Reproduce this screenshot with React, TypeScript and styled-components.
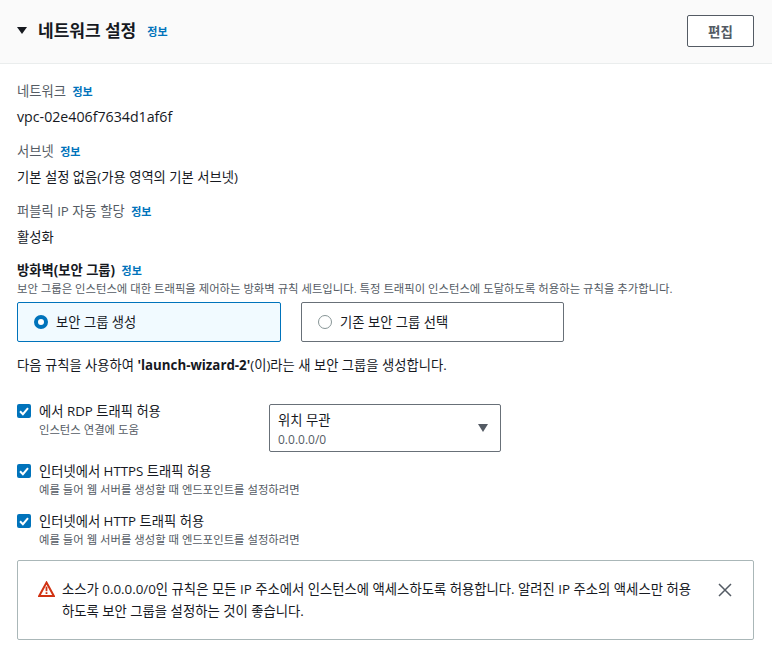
import React, { FC } from 'react';
import styled, { createGlobalStyle } from 'styled-components';

const GlobalStyle = createGlobalStyle`
  html, body {
    margin: 0;
    padding: 0;
    background: #fff;
  }
  body {
    font-family: "Open Sans", "Noto Sans CJK KR", sans-serif;
    font-size: 13.3px;
    color: #16191f;
    overflow: hidden;
  }
  * {
    box-sizing: border-box;
  }
`;

const fields = [
  { label: '네트워크', value: 'vpc-02e406f7634d1af6f', latin: true },
  { label: '서브넷', value: '기본 설정 없음(가용 영역의 기본 서브넷)' },
  { label: '퍼블릭 IP 자동 할당', value: '활성화' },
];

const CheckIcon: FC = () => (
  <svg width="14" height="14" viewBox="0 0 14 14" fill="none">
    <path d="M3 7.3 L5.9 10.2 L11 4.2" stroke="#fff" strokeWidth="2" />
  </svg>
);

const CheckRow: FC<{ title: string; hint: string }> = ({ title, hint }) => (
  <CheckLabel>
    <CheckBox>
      <CheckIcon />
    </CheckBox>
    <div>
      <CheckTitle>{title}</CheckTitle>
      <CheckHint>{hint}</CheckHint>
    </div>
  </CheckLabel>
);

export default function App() {
  return (
    <Page>
      <GlobalStyle />
      <Header>
        <HeaderTitle>
          <Caret />
          <Heading>네트워크 설정</Heading>
          <Info>정보</Info>
        </HeaderTitle>
        <EditButton>편집</EditButton>
      </Header>

      <Body>
        {fields.map((field) => (
          <Field key={field.label}>
            <FieldLabel>
              {field.label}
              <LabelInfo>정보</LabelInfo>
            </FieldLabel>
            <FieldValue $latin={field.latin}>{field.value}</FieldValue>
          </Field>
        ))}

        <FirewallLabel>
          방화벽(보안 그룹)
          <LabelInfo>정보</LabelInfo>
        </FirewallLabel>
        <FirewallHint>
          보안 그룹은 인스턴스에 대한 트래픽을 제어하는 방화벽 규칙 세트입니다. 특정 트래픽이 인스턴스에 도달하도록 허용하는 규칙을 추가합니다.
        </FirewallHint>

        <RadioGroup>
          <RadioCard $selected>
            <RadioDot $selected />
            보안 그룹 생성
          </RadioCard>
          <RadioCard>
            <RadioDot />
            기존 보안 그룹 선택
          </RadioCard>
        </RadioGroup>

        <RuleNote>
          다음 규칙을 사용하여 <b>'launch-wizard-2'</b>(이)라는 새 보안 그룹을 생성합니다.
        </RuleNote>

        <RdpRow>
          <RdpCheck>
            <CheckRow title="에서 RDP 트래픽 허용" hint="인스턴스 연결에 도움" />
          </RdpCheck>
          <Select>
            <div>
              <SelectTitle>위치 무관</SelectTitle>
              <SelectSub>0.0.0.0/0</SelectSub>
            </div>
            <SelectCaret />
          </Select>
        </RdpRow>

        <CheckList>
          <CheckRow title="인터넷에서 HTTPS 트래픽 허용" hint="예를 들어 웹 서버를 생성할 때 엔드포인트를 설정하려면" />
          <CheckRow title="인터넷에서 HTTP 트래픽 허용" hint="예를 들어 웹 서버를 생성할 때 엔드포인트를 설정하려면" />
        </CheckList>

        <Alert>
          <AlertIcon width="17" height="16" viewBox="0 0 17 16" fill="none">
            <path d="M8.5 1.6 L15.8 14.9 H1.2 Z" stroke="#d13212" strokeWidth="2" />
            <path d="M8.5 5.6 V10.2" stroke="#d13212" strokeWidth="1.8" />
            <path d="M8.5 11.2 V13" stroke="#d13212" strokeWidth="1.8" />
          </AlertIcon>
          <AlertText>
            소스가 0.0.0.0/0인 규칙은 모든 IP 주소에서 인스턴스에 액세스하도록 허용합니다. 알려진 IP 주소의 액세스만 허용하도록 보안 그룹을 설정하는 것이 좋습니다.
          </AlertText>
          <CloseIcon width="14" height="14" viewBox="0 0 14 14" fill="none">
            <path d="M1 1 L13 13 M13 1 L1 13" stroke="#545b64" strokeWidth="1.5" />
          </CloseIcon>
        </Alert>
      </Body>
    </Page>
  );
}

const Page = styled.div`
  width: 772px;
  height: 657px;
  overflow: hidden;
`;

const Header = styled.header`
  display: flex;
  align-items: center;
  justify-content: space-between;
  height: 64px;
  padding: 0 18px 2px 17px;
  background: #fafafa;
  border-bottom: 1px solid #eaeded;
`;

const HeaderTitle = styled.div`
  display: flex;
  align-items: center;
`;

const Caret = styled.span`
  width: 0;
  height: 0;
  margin-right: 11px;
  border-left: 5px solid transparent;
  border-right: 5px solid transparent;
  border-top: 7px solid #16191f;
`;

const Heading = styled.h2`
  margin: 0 11px 0 0;
  font-size: 17px;
  line-height: 22px;
  font-weight: 700;
`;

const Info = styled.span`
  font-size: 11px;
  font-weight: 700;
  color: #0073bb;
`;

const LabelInfo = styled(Info)`
  margin-left: 6.5px;
`;

const EditButton = styled.button`
  width: 67px;
  height: 32px;
  padding: 0;
  background: #fff;
  border: 1px solid #545b64;
  border-radius: 2px;
  font: 700 13.5px "Open Sans", "Noto Sans CJK KR", sans-serif;
  color: #545b64;
`;

const Body = styled.div`
  padding: 17px 18px 0 17px;
`;

const Field = styled.div`
  height: 60px;
`;

const FieldLabel = styled.div`
  height: 20px;
  line-height: 20px;
  color: #545b64;
`;

const FieldValue = styled.div<{ $latin?: boolean }>`
  margin-top: 6px;
  line-height: 20px;
  font-size: ${(p) => (p.$latin ? '14.2px' : '13.3px')};
`;

const FirewallLabel = styled.div`
  margin-top: -1px;
  line-height: 20px;
  font-weight: 700;
`;

const FirewallHint = styled.div`
  margin-top: 1px;
  line-height: 14px;
  font-size: 11.35px;
  color: #545b64;
  white-space: nowrap;
`;

const RadioGroup = styled.div`
  display: flex;
  gap: 20px;
  margin-top: 6px;
`;

const RadioCard = styled.div<{ $selected?: boolean }>`
  display: flex;
  align-items: center;
  width: ${(p) => (p.$selected ? '264px' : '263px')};
  height: 40px;
  padding: 0 0 1px 16px;
  border: 1px solid ${(p) => (p.$selected ? '#0073bb' : '#687078')};
  border-radius: 2px;
  background: ${(p) => (p.$selected ? '#f1faff' : '#fff')};
`;

const RadioDot = styled.span<{ $selected?: boolean }>`
  flex: none;
  width: 14px;
  height: 14px;
  margin-right: 8px;
  border-radius: 50%;
  background: #fff;
  border: ${(p) => (p.$selected ? '4px solid #0073bb' : '1px solid #879596')};
`;

const RuleNote = styled.p`
  margin: 13px 0 0;
  line-height: 20px;
`;

const RdpRow = styled.div`
  display: flex;
  align-items: flex-start;
  margin-top: 29px;
`;

const RdpCheck = styled.div`
  width: 252px;
  margin-top: -3px;
`;

const CheckLabel = styled.div`
  display: flex;
  align-items: flex-start;
`;

const CheckBox = styled.span`
  flex: none;
  display: flex;
  align-items: center;
  justify-content: center;
  width: 14px;
  height: 14px;
  margin: 3px 8px 0 0;
  border-radius: 2px;
  background: #0073bb;
`;

const CheckTitle = styled.div`
  line-height: 20px;
`;

const CheckHint = styled.div`
  line-height: 18px;
  font-size: 11.35px;
  color: #545b64;
`;

const Select = styled.div`
  display: flex;
  align-items: center;
  justify-content: space-between;
  width: 232px;
  height: 48px;
  padding: 4px 12px 0 8px;
  border: 1px solid #687078;
  border-radius: 2px;
`;

const SelectTitle = styled.div`
  line-height: 20px;
`;

const SelectSub = styled.div`
  line-height: 20px;
  font-size: 12px;
  color: #545b64;
`;

const SelectCaret = styled.span`
  width: 0;
  height: 0;
  margin-bottom: 4px;
  border-left: 5px solid transparent;
  border-right: 5px solid transparent;
  border-top: 8px solid #545b64;
`;

const CheckList = styled.div`
  display: flex;
  flex-direction: column;
  gap: 12px;
  margin-top: 9px;
`;

const Alert = styled.div`
  display: flex;
  align-items: flex-start;
  width: 737px;
  height: 80px;
  margin-top: 11px;
  padding: 17px 21px 0 20px;
  border: 1px solid #aab7b8;
  border-radius: 2px;
`;

const AlertIcon = styled.svg`
  flex: none;
  margin: 3px 7px 0 0;
`;

const AlertText = styled.div`
  width: 636px;
  flex: none;
  line-height: 22px;
  font-size: 13.35px;
`;

const CloseIcon = styled.svg`
  flex: none;
  margin: 5px 0 0 20px;
`;
